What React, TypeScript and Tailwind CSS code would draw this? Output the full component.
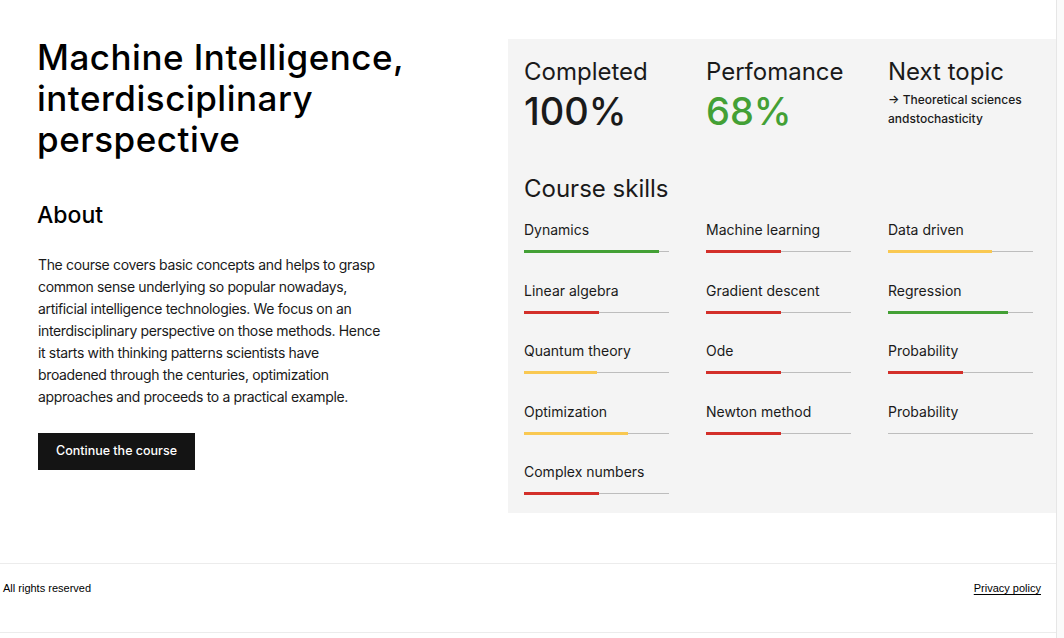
import React from 'react';

type Skill = { name: string; value: number; color: string };

const skills: Skill[] = [
  { name: 'Dynamics', value: 93, color: 'bg-[#43a035]' },
  { name: 'Machine learning', value: 52, color: 'bg-[#d32f2a]' },
  { name: 'Data driven', value: 72, color: 'bg-[#f9c851]' },
  { name: 'Linear algebra', value: 52, color: 'bg-[#d32f2a]' },
  { name: 'Gradient descent', value: 52, color: 'bg-[#d32f2a]' },
  { name: 'Regression', value: 83, color: 'bg-[#43a035]' },
  { name: 'Quantum theory', value: 50, color: 'bg-[#f9c851]' },
  { name: 'Ode', value: 52, color: 'bg-[#d32f2a]' },
  { name: 'Probability', value: 52, color: 'bg-[#d32f2a]' },
  { name: 'Optimization', value: 72, color: 'bg-[#f9c851]' },
  { name: 'Newton method', value: 52, color: 'bg-[#d32f2a]' },
  { name: 'Probability', value: 0, color: 'bg-[#d32f2a]' },
  { name: 'Complex numbers', value: 52, color: 'bg-[#d32f2a]' },
];

const SkillBar: React.FC<{ skill: Skill }> = ({ skill }) => (
  <div>
    <div className="text-[14px] leading-[20px] text-[#1a1a1a]">{skill.name}</div>
    <div className="relative mt-[10px] h-[3px] w-[145px]">
      <div className="absolute left-0 right-0 top-[1px] h-px bg-[#bdbdbd]" />
      <div className={`absolute left-0 top-0 h-[3px] ${skill.color}`} style={{ width: `${skill.value}%` }} />
    </div>
  </div>
);

export default function App() {
  return (
    <div className="flex min-h-[638px] bg-white" style={{ fontFamily: 'Inter, "Noto Sans", sans-serif' }}>
      <div className="flex w-[1057px] flex-col border-r border-[#e6e6e6]">
        <main className="flex pt-[39px]">
          {/* Course intro */}
          <section className="w-[509px] pl-[37px] pr-6">
            <h1 className="mt-[-2px] text-[35px] leading-[41px] font-medium tracking-[0.5px] text-black">
              Machine Intelligence,
              <br />
              interdisciplinary
              <br />
              perspective
            </h1>
            <h2 className="mt-[39px] text-[23px] leading-[32px] font-medium text-black">About</h2>
            <p className="mt-[23px] w-[349px] pl-px text-[14px] leading-[22px] tracking-[-0.35px] text-[#1a1a1a]">
              The course covers basic concepts and helps to grasp common sense underlying so popular nowadays, artificial intelligence technologies. We focus on an interdisciplinary perspective on those methods. Hence it starts with thinking patterns scientists have broadened through the centuries, optimization approaches and proceeds to a practical example.
            </p>
            <button className="mt-[25px] ml-px h-[37px] w-[157px] bg-[#141414] text-[12.5px] font-medium text-white">
              Continue the course
            </button>
          </section>

          {/* Progress panel */}
          <section className="w-[548px] bg-[#f4f4f4] pt-[18px] pb-[18px] pl-[16px]">
            <div className="grid grid-cols-[182px_182px_182px]">
              <div>
                <div className="text-[24px] leading-[30px] text-[#1a1a1a]">Completed</div>
                <div className="mt-[2px] text-[38px] leading-[44px] font-medium text-[#1a1a1a]">100%</div>
              </div>
              <div>
                <div className="text-[24px] leading-[30px] text-[#1a1a1a]">Perfomance</div>
                <div className="mt-[2px] text-[38px] leading-[44px] font-medium text-[#43a035]">68%</div>
              </div>
              <div>
                <div className="text-[24px] leading-[30px] text-[#1a1a1a]">Next topic</div>
                <div className="mt-[3px] text-[12px] leading-[19px] font-medium text-[#1a1a1a]">
                  → Theoretical sciences
                  <br />
                  andstochasticity
                </div>
              </div>
            </div>
            <h3 className="mt-[41px] text-[24px] leading-[30px] text-[#1a1a1a]">Course skills</h3>
            <div className="mt-[16px] grid grid-cols-[182px_182px_182px] gap-y-[27.5px]">
              {skills.map((s, i) => (
                <SkillBar key={i} skill={s} />
              ))}
            </div>
          </section>
        </main>

        <footer className="mt-[50px] flex h-[70px] items-start justify-between border-t border-b border-[#ececec] pt-[17px] pl-[3px] pr-[15px] text-[11px] leading-[14px] text-black" style={{ fontFamily: '"Liberation Sans", Arial, sans-serif' }}>
          <span>All rights reserved</span>
          <a href="#" className="underline underline-offset-2">Privacy policy</a>
        </footer>
      </div>
      <div className="flex-1 bg-[#fafafa]" />
    </div>
  );
}
